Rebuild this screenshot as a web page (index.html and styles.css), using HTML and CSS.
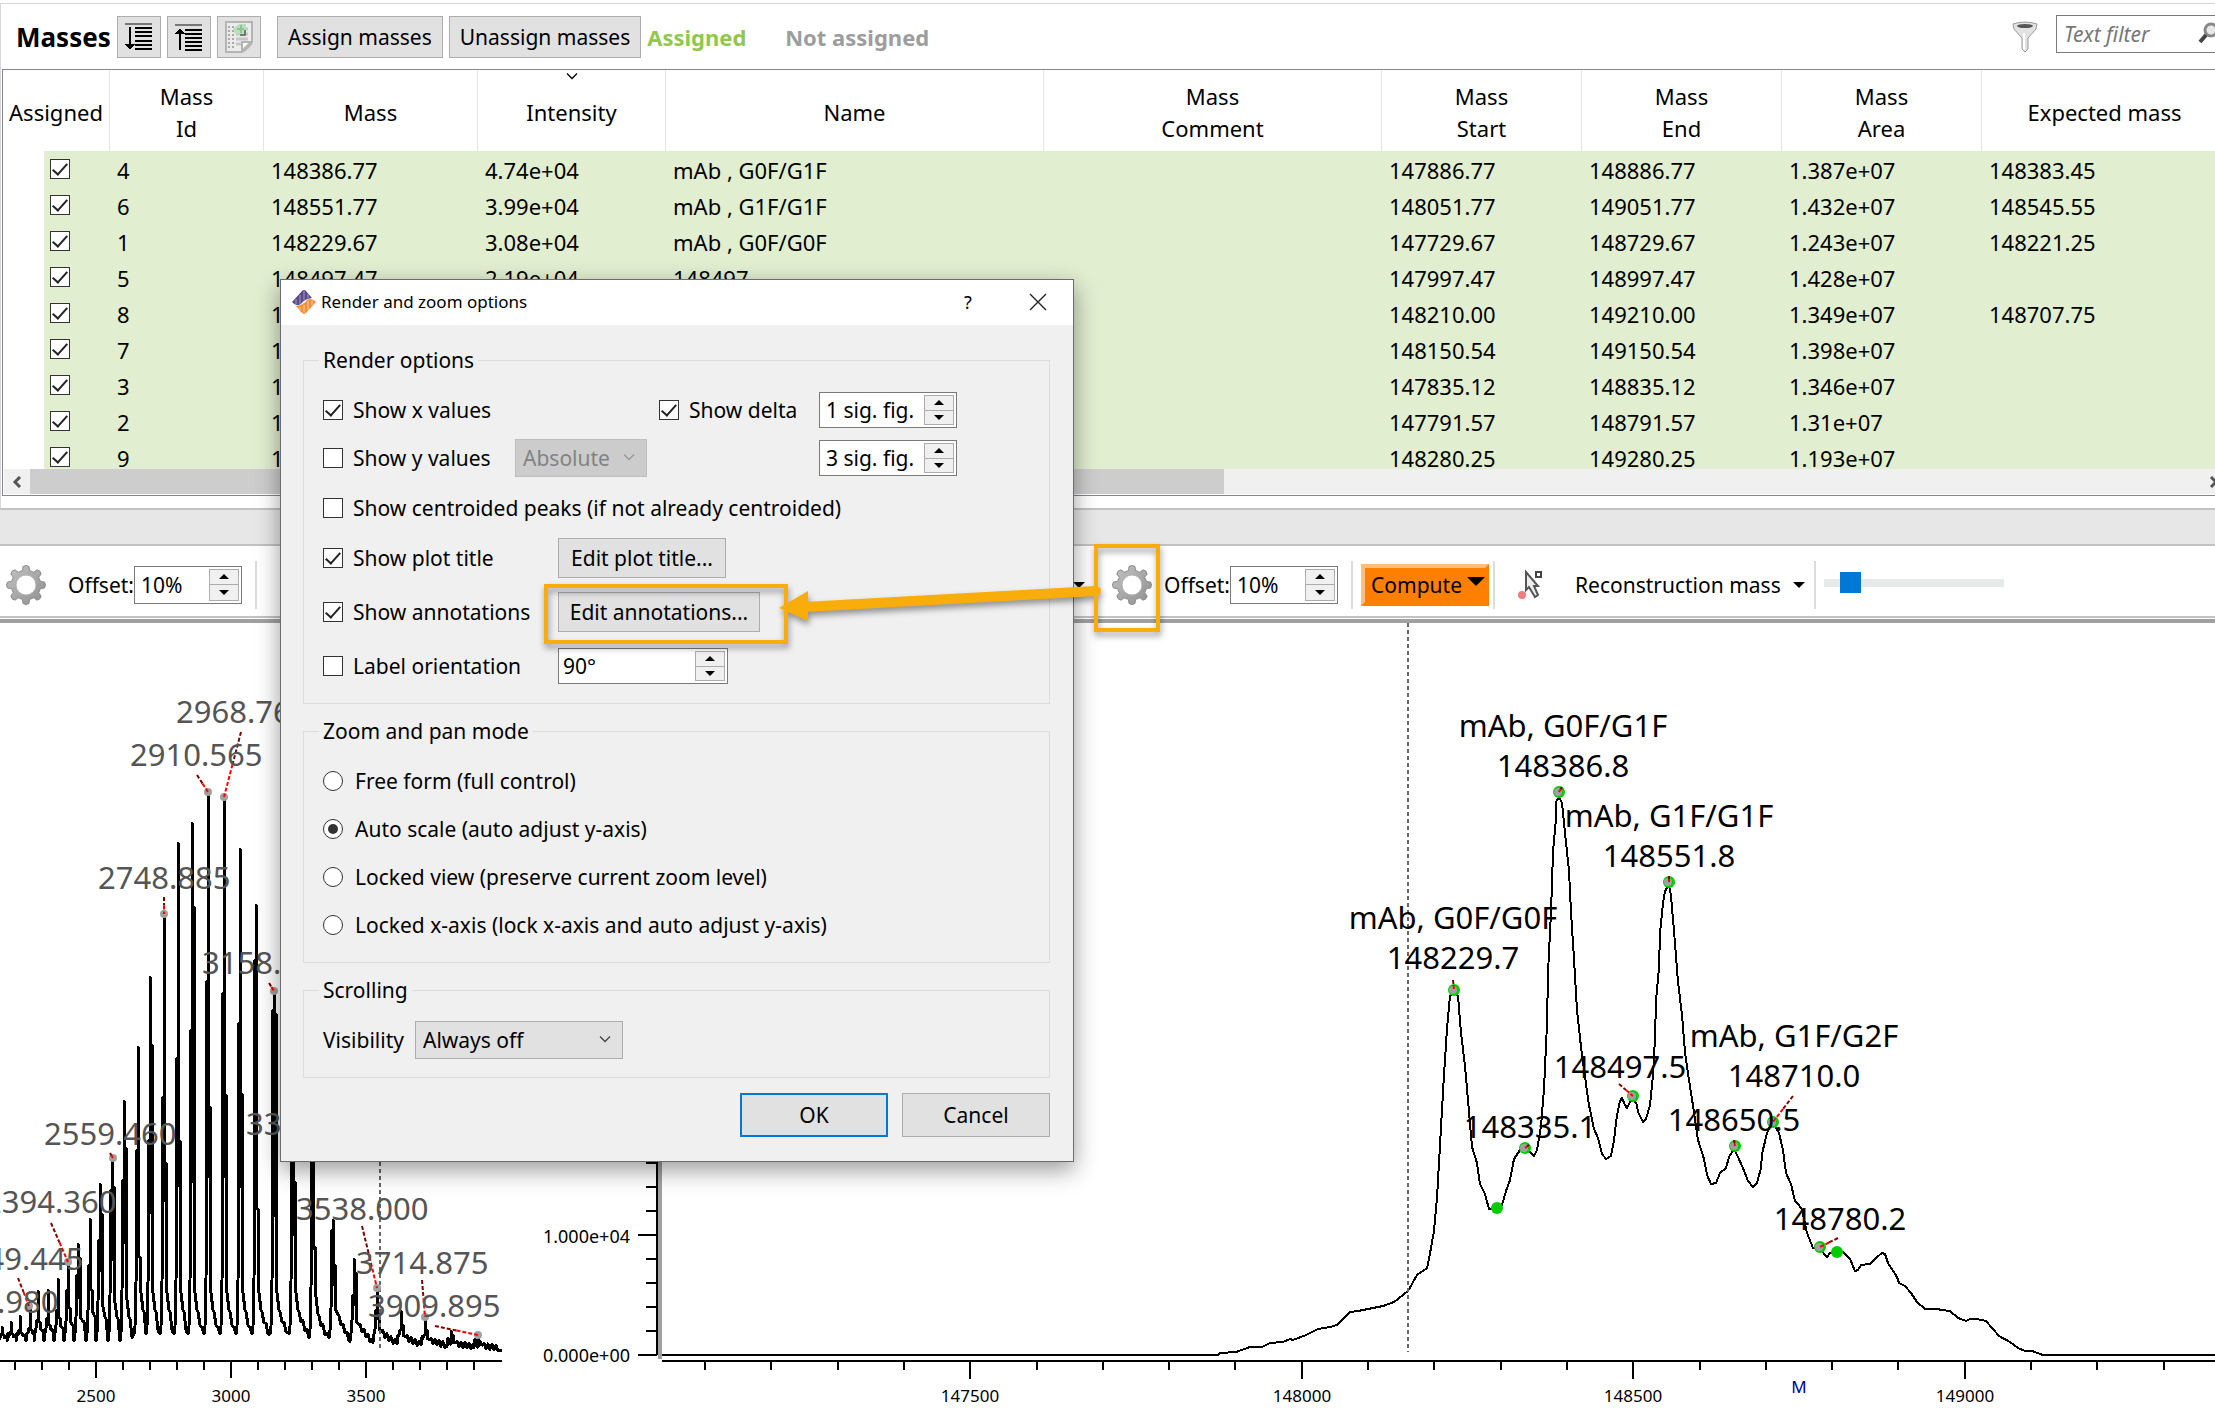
FILE: index.html
```html
<!DOCTYPE html>
<html lang="en">
<head>
  <meta charset="UTF-8" />
  <meta name="viewport" content="width=device-width, initial-scale=1.0" />
  <title>Masses</title>
  <link rel="stylesheet" href="styles.css">
</head>
<body>
  <svg class="defs" width="0" height="0" aria-hidden="true">
    <defs>
      <linearGradient id="metal" x1="0" y1="0" x2="1" y2="1">
        <stop offset="0" stop-color="#c4c4c4" />
        <stop offset="1" stop-color="#8e8e8e" />
      </linearGradient>
      <symbol id="gear" viewBox="0 0 40 40">
        <g fill="url(#metal)" stroke="#8c8c8c" stroke-width="1">
          <path d="M16.500 5.500L17 1.500Q20 -.5 23 1.500L23.500 5.500L27.800 7.300L31 4.800Q34.600 5.400 35.200 9L32.700 12.200L34.500 16.500L38.500 17Q40.500 20 38.500 23L34.500 23.500L32.700 27.800L35.200 31Q34.600 34.600 31 35.200L27.800 32.700L23.500 34.500L23 38.500Q20 40.500 17 38.500L16.500 34.500L12.200 32.700L9 35.200Q5.400 34.600 4.800 31L7.300 27.800L5.500 23.500L1.500 23Q-.5 20 1.500 17L5.500 16.500L7.300 12.200L4.800 9Q5.400 5.400 9 4.800L12.200 7.300Z" />
          <circle cx="20" cy="20" r="10" fill="#fff" stroke="#b5b5b5" />
        </g>
      </symbol>
      <symbol id="chevron" viewBox="0 0 12 8">
        <path d="M1 1.500L6 6.500L11 1.500" fill="none" stroke="currentColor" stroke-width="1.300" />
      </symbol>
    </defs>
  </svg>

  <main class="app">
    <section class="masses">
      <div class="mass-bar">
        <h1>Masses</h1>
        <button class="btn icon-btn" aria-label="Sort descending">
          <svg width="30" height="30" viewBox="0 0 30 30" shape-rendering="crispEdges">
            <path d="M1 2H28" stroke="#777" stroke-width="2" />
            <path d="M11 6H28M11 10H28M11 14H28M11 19H28M11 23H28M11 27H28M6 5V24" stroke="#000" stroke-width="2" />
            <path d="M1 22H11L6 28Z" />
          </svg>
        </button>
        <button class="btn icon-btn" aria-label="Sort ascending">
          <svg width="30" height="30" viewBox="0 0 30 30" shape-rendering="crispEdges">
            <path d="M1 3H28" stroke="#777" stroke-width="2" />
            <path d="M11 8H28M11 12H28M11 16H28M11 20H28M11 24H28M11 28H28M6 10V28" stroke="#000" stroke-width="2" />
            <path d="M1 12H11L6 6Z" />
          </svg>
        </button>
        <button class="btn icon-btn" aria-label="Export to spreadsheet">
          <svg width="32" height="34" viewBox="0 0 32 34">
            <path d="M3 2H29V22Q26 28 19 32H3Z" fill="#ececec" stroke="#b4b4b4" stroke-width="2" />
            <path d="M6 6V29M10 6V29" stroke="#aaa" stroke-width="2" stroke-dasharray="2 2" />
            <path d="M13 9H25M13 14H25M13 19H25M13 24H18" stroke="#c6c6c6" stroke-width="3" />
            <path d="M10 9L16 4H23V14H12Z" fill="#b9dfbc" />
            <path d="M14 9H21M18 5V13" stroke="#8cc792" stroke-width="2" />
            <path d="M22 10V15H17" fill="none" stroke="#777" stroke-width="2" />
            <path d="M19 31V22H28Z" fill="#fafafa" stroke="#b4b4b4" stroke-width="2" />
          </svg>
        </button>
        <button class="btn assign-btn">Assign masses</button>
        <button class="btn">Unassign masses</button>
        <span class="legend-on">Assigned</span>
        <span class="legend-off">Not assigned</span>
        <svg class="funnel" width="26" height="32" viewBox="0 0 26 32">
          <path d="M1 3Q13 -1 25 3L24 8L16 17V28L13 31L10 28V17L2 8Z" fill="#e2e2e2" stroke="#999" />
          <ellipse cx="13" cy="5" rx="8" ry="2" fill="#555" />
          <path d="M12 12V29" stroke="#fff" stroke-width="2" />
        </svg>
        <div class="filter">
          <input type="text" placeholder="Text filter" aria-label="Text filter" />
          <svg width="24" height="24" viewBox="0 0 24 24">
            <circle cx="14" cy="8" r="6" fill="#e8e8e8" stroke="#888" stroke-width="3" />
            <path d="M9 13L3 20" stroke="#444" stroke-width="4" />
          </svg>
        </div>
      </div>

      <div class="table-frame">
        <div class="table-view">
          <table>
            <colgroup>
              <col class="c-assigned"><col class="c-id"><col class="c-mass"><col class="c-intensity"><col class="c-name">
              <col class="c-comment"><col class="c-range"><col class="c-range"><col class="c-range"><col>
            </colgroup>
            <thead>
              <tr>
                <th>Assigned</th>
                <th>Mass<br>Id</th>
                <th>Mass</th>
                <th class="sorted"><svg width="12" height="8"><use href="#chevron" /></svg>Intensity</th>
                <th>Name</th>
                <th>Mass<br>Comment</th>
                <th>Mass<br>Start</th>
                <th>Mass<br>End</th>
                <th>Mass<br>Area</th>
                <th>Expected mass</th>
              </tr>
            </thead>
            <tbody>
              <tr><td><input type="checkbox" aria-label="Mass 4" checked></td><td>4</td><td>148386.77</td><td>4.74e+04</td><td>mAb , G0F/G1F</td><td></td><td>147886.77</td><td>148886.77</td><td>1.387e+07</td><td>148383.45</td></tr>
              <tr><td><input type="checkbox" aria-label="Mass 6" checked></td><td>6</td><td>148551.77</td><td>3.99e+04</td><td>mAb , G1F/G1F</td><td></td><td>148051.77</td><td>149051.77</td><td>1.432e+07</td><td>148545.55</td></tr>
              <tr><td><input type="checkbox" aria-label="Mass 1" checked></td><td>1</td><td>148229.67</td><td>3.08e+04</td><td>mAb , G0F/G0F</td><td></td><td>147729.67</td><td>148729.67</td><td>1.243e+07</td><td>148221.25</td></tr>
              <tr><td><input type="checkbox" aria-label="Mass 5" checked></td><td>5</td><td>148497.47</td><td>2.19e+04</td><td>148497</td><td></td><td>147997.47</td><td>148997.47</td><td>1.428e+07</td><td></td></tr>
              <tr><td><input type="checkbox" aria-label="Mass 8" checked></td><td>8</td><td>148710.00</td><td></td><td></td><td></td><td>148210.00</td><td>149210.00</td><td>1.349e+07</td><td>148707.75</td></tr>
              <tr><td><input type="checkbox" aria-label="Mass 7" checked></td><td>7</td><td>148650.54</td><td></td><td></td><td></td><td>148150.54</td><td>149150.54</td><td>1.398e+07</td><td></td></tr>
              <tr><td><input type="checkbox" aria-label="Mass 3" checked></td><td>3</td><td>148335.12</td><td></td><td></td><td></td><td>147835.12</td><td>148835.12</td><td>1.346e+07</td><td></td></tr>
              <tr><td><input type="checkbox" aria-label="Mass 2" checked></td><td>2</td><td>148291.57</td><td></td><td></td><td></td><td>147791.57</td><td>148791.57</td><td>1.31e+07</td><td></td></tr>
              <tr><td><input type="checkbox" aria-label="Mass 9" checked></td><td>9</td><td>148780.25</td><td></td><td></td><td></td><td>148280.25</td><td>149280.25</td><td>1.193e+07</td><td></td></tr>
            </tbody>
          </table>
        </div>
        <div class="scrollbar">
          <button aria-label="Scroll left"><svg width="10" height="12" viewBox="0 0 10 12"><path d="M8 1L3 6L8 11" fill="none" stroke="#555" stroke-width="3" /></svg></button>
          <div class="track"><div class="thumb"></div></div>
          <button class="scroll-right" aria-label="Scroll right"><svg width="10" height="12" viewBox="0 0 10 12"><path d="M2 1L7 6L2 11" fill="none" stroke="#555" stroke-width="3" /></svg></button>
        </div>
      </div>
    </section>

    <div class="band"></div>

    <section class="plots">
      <div class="pane">
        <div class="plot-bar">
          <button class="gear-btn" aria-label="Plot options"><svg width="40" height="40"><use href="#gear" /></svg></button>
          <label for="offset1">Offset:</label>
          <span class="spin spin-offset"><input id="offset1" type="text" value="10%"><span class="steps"><button aria-label="Up"></button><button aria-label="Down"></button></span></span>
          <span class="sep"></span>
        </div>
        <svg class="plot" id="spectrum" viewBox="0 623 658 786"></svg>
      </div>
      <div class="divider"></div>
      <div class="pane">
        <div class="plot-bar plot-bar-right">
          <button class="drop-btn" aria-label="View"><span class="caret"></span></button>
          <button class="gear-btn" aria-label="Plot options"><svg width="40" height="40"><use href="#gear" /></svg></button>
          <label for="offset2">Offset:</label>
          <span class="spin spin-offset"><input id="offset2" type="text" value="10%"><span class="steps"><button aria-label="Up"></button><button aria-label="Down"></button></span></span>
          <span class="sep"></span>
          <button class="compute">Compute<span class="caret caret-big"></span></button>
          <span class="sep sep-tight"></span>
          <button class="pick-btn" aria-label="Pick points">
            <svg width="26" height="30" viewBox="0 0 26 30">
              <path d="M9 2V20L12 17L18 27L21 25L17 16H21Z" fill="#eee" stroke="#555" stroke-width="2" />
              <rect x="19" y="2" width="5" height="5" fill="#fff" stroke="#444" stroke-width="2" />
              <circle cx="5" cy="25" r="4" fill="#f47c7c" />
            </svg>
          </button>
          <button class="mode-btn">Reconstruction mass<span class="caret"></span></button>
          <span class="sep"></span>
          <input class="slider" type="range" min="0" max="100" value="10" aria-label="Smoothing">
        </div>
        <svg class="plot" id="deconvolved" viewBox="662 623 1553 786"></svg>
      </div>
    </section>
  </main>

  <div class="dialog" role="dialog" aria-labelledby="dialogTitle">
    <header>
      <svg width="24" height="24" viewBox="0 0 24 24">
        <path d="M0 12L10 1Q12 -1 14 1L20 8Q12 9 9 14Q4 17 0 12Z" fill="#5b4b8a" />
        <path d="M24 12L14 23Q12 25 10 23L4 16Q12 15 15 10Q20 7 24 12Z" fill="#f0923b" />
        <path d="M4 9V14M8 5V14M12 1V10M16 4V8" stroke="#a79cc4" />
        <path d="M8 17V20M12 15V23M16 11V20M20 10V15" stroke="#f9cfa4" />
      </svg>
      <h2 id="dialogTitle">Render and zoom options</h2>
      <button class="help-btn" aria-label="Help">?</button>
      <button class="close-btn" aria-label="Close"><svg width="18" height="18" viewBox="0 0 18 18"><path d="M1 1L17 17M17 1L1 17" stroke="#222" stroke-width="1.400" /></svg></button>
    </header>
    <form class="dialog-body">
      <fieldset>
        <legend>Render options</legend>
        <div class="rows render-rows">
          <div class="row">
            <label class="lead-delta"><input type="checkbox" checked>Show x values</label>
            <label class="lead-spin"><input type="checkbox" checked>Show delta</label>
            <span class="spin spin-fig"><input type="text" value="1 sig. fig." aria-label="Delta figures"><span class="steps"><button type="button" aria-label="Up"></button><button type="button" aria-label="Down"></button></span></span>
          </div>
          <div class="row">
            <label class="lead-select"><input type="checkbox">Show y values</label>
            <span class="select select-abs"><select aria-label="Y values" disabled><option>Absolute</option></select><svg width="12" height="8"><use href="#chevron" /></svg></span>
            <span class="spin spin-fig"><input type="text" value="3 sig. fig." aria-label="Y figures"><span class="steps"><button type="button" aria-label="Up"></button><button type="button" aria-label="Down"></button></span></span>
          </div>
          <div class="row"><label><input type="checkbox">Show centroided peaks (if not already centroided)</label></div>
          <div class="row">
            <label class="lead-edit"><input type="checkbox" checked>Show plot title</label>
            <button type="button" class="btn edit-title">Edit plot title...</button>
          </div>
          <div class="row">
            <label class="lead-edit"><input type="checkbox" checked>Show annotations</label>
            <button type="button" class="btn edit-notes">Edit annotations...</button>
          </div>
          <div class="row">
            <label class="lead-edit"><input type="checkbox">Label orientation</label>
            <span class="spin spin-angle"><input type="text" value="90°" aria-label="Angle"><span class="steps"><button type="button" aria-label="Up"></button><button type="button" aria-label="Down"></button></span></span>
          </div>
        </div>
      </fieldset>
      <fieldset>
        <legend>Zoom and pan mode</legend>
        <div class="rows radio-rows">
          <div class="row"><label><input type="radio" name="zoom">Free form (full control)</label></div>
          <div class="row"><label><input type="radio" name="zoom" checked>Auto scale (auto adjust y-axis)</label></div>
          <div class="row"><label><input type="radio" name="zoom">Locked view (preserve current zoom level)</label></div>
          <div class="row"><label><input type="radio" name="zoom">Locked x-axis (lock x-axis and auto adjust y-axis)</label></div>
        </div>
      </fieldset>
      <fieldset>
        <legend>Scrolling</legend>
        <div class="rows">
          <div class="row">
            <label class="lead-vis" for="visibility">Visibility</label>
            <span class="select select-vis"><select id="visibility"><option>Always off</option></select><svg width="12" height="8"><use href="#chevron" /></svg></span>
          </div>
        </div>
      </fieldset>
      <div class="actions">
        <button type="button" class="btn ok">OK</button>
        <button type="button" class="btn">Cancel</button>
      </div>
    </form>
  </div>

  <!-- callout: gear button opens the annotations editor -->
  <svg class="callout" width="640" height="110" viewBox="535 540 640 110" aria-hidden="true">
    <g fill="none" stroke="#f8ad0a" stroke-width="4">
      <rect x="546" y="587" width="240" height="56" />
      <rect x="1096" y="547" width="62" height="84" />
    </g>
    <path d="M1096 592L804 608" stroke="#f8ad0a" stroke-width="10" stroke-linecap="round" />
    <path d="M779 609L808 592V622Z" fill="#f8ad0a" />
  </svg>

  <script src="plots.js"></script>
</body>
</html>
```
FILE: styles.css
```css
* {
  box-sizing: border-box;
}

body {
  margin: 0;
  overflow: hidden;
  background: #fff;
  color: #000;
  font-family: "Noto Sans", "Open Sans", sans-serif;
  font-size: 21px;
}

button, input, select {
  font: inherit;
  color: inherit;
}

button {
  padding: 0;
  border: 0;
  background: none;
}

.defs {
  position: absolute;
}

.app {
  padding-top: 3px;
}

/* masses toolbar */
.masses {
  border-top: 1px solid #d8d8d8;
  border-left: 1px solid #d8d8d8;
  padding: 0 0 12px 1px;
}

.mass-bar {
  display: flex;
  align-items: center;
  gap: 6px;
  height: 65px;
  padding: 0 0 0 14px;
  overflow: hidden;
}

h1 {
  margin: 0;
  font-size: 26px;
  line-height: 32px;
  width: 95px;
}

.btn {
  height: 42px;
  padding: 0 10px;
  border: 1px solid #adadad;
  background: #e1e1e1;
  white-space: nowrap;
}

.icon-btn {
  width: 44px;
  padding: 0;
  display: flex;
  align-items: center;
  justify-content: center;
}

.assign-btn {
  margin-left: 10px;
}

.legend-on, .legend-off {
  font-size: 22px;
  font-weight: bold;
}

.legend-on {
  color: #92c74e;
  width: 132px;
}

.legend-off {
  color: #9d9d9d;
}

.funnel {
  margin-left: auto;
}

.filter {
  display: flex;
  align-items: center;
  width: 173px;
  height: 38px;
  margin: 0 -14px 6px 12px;
  border: 1px solid #7a7a7a;
  background: #fff;
}

.filter input {
  width: 140px;
  padding: 0 7px;
  border: 0;
  outline: 0;
  background: none;
}

.filter input::placeholder {
  font-style: italic;
  color: #777;
}

/* table */
.table-frame {
  border: 1px solid #828790;
  border-right: 0;
}

.table-view {
  height: 399px;
  overflow: hidden;
}

table {
  width: 100%;
  table-layout: fixed;
  border-collapse: separate;
  border-spacing: 0;
  font-size: 22px;
}

.c-assigned { width: 107px; }
.c-id { width: 154px; }
.c-mass { width: 214px; }
.c-intensity { width: 188px; }
.c-name { width: 378px; }
.c-comment { width: 338px; }
.c-range { width: 200px; }

th {
  position: relative;
  height: 81px;
  padding: 2px 0 0;
  border-right: 1px solid #e5e5e5;
  font-weight: normal;
  line-height: 32px;
}

th:last-child {
  border-right: 0;
  padding-left: 12px;
}

.sorted svg {
  position: absolute;
  top: 2px;
  left: 50%;
  margin-left: -6px;
}

td {
  height: 36px;
  padding: 1px 0 0 7px;
  background: #e1eed0;
  line-height: 32px;
  white-space: nowrap;
}

td:first-child {
  border-left: 41px solid #fff;
  padding: 0 0 0 6px;
}

input[type="checkbox"], input[type="radio"] {
  appearance: none;
  flex: none;
  display: grid;
  place-items: center;
  width: 20px;
  height: 20px;
  margin: 0;
  border: 1px solid #333;
  background: #fff;
}

input[type="checkbox"]:checked::after {
  content: "";
  width: 6px;
  height: 13px;
  margin-top: -4px;
  border: solid #222;
  border-width: 0 2px 2px 0;
  transform: rotate(42deg);
}

input[type="radio"] {
  border-radius: 50%;
}

input[type="radio"]:checked::after {
  content: "";
  width: 10px;
  height: 10px;
  border-radius: 50%;
  background: #333;
}

.scrollbar {
  display: flex;
  height: 25px;
  margin: 0 0 1px 1px;
  background: #f0f0f0;
}

.scrollbar button {
  display: grid;
  place-items: center;
  width: 26px;
}

.scroll-right {
  margin-right: -12px;
}

.track {
  flex: 1;
}

.thumb {
  width: 55%;
  height: 100%;
  background: #cdcdcd;
}

.band {
  height: 38px;
  border: solid #c2c2c2;
  border-width: 2px 0;
  background: #e7e7e7;
}

/* plots */
.plots {
  display: grid;
  grid-template-columns: 658fr 4px 1553fr;
}

.pane {
  min-width: 0;
}

.divider {
  background: #a0a0a0;
  margin-bottom: 50px;
}

.plot-bar {
  display: flex;
  align-items: center;
  height: 77px;
  padding: 4px 0 0 6px;
  border-bottom: 4px solid #a0a0a0;
  background: linear-gradient(#c2c2c2, #c2c2c2) 0 70px / 100% 2px no-repeat;
}

.plot-bar label {
  width: 66px;
}

.plot-bar-right {
  padding-left: 10px;
}

.gear-btn {
  width: 40px;
  height: 40px;
  margin-right: 22px;
}

.plot-bar-right .gear-btn {
  margin: 0 12px 0 27px;
}

.drop-btn {
  width: 413px;
  height: 40px;
  display: flex;
  align-items: center;
  justify-content: flex-end;
}

.caret {
  border: 6px solid transparent;
  border-top-color: #000;
  border-bottom: 0;
}

.caret-big {
  border-width: 9px 9px 0;
  margin: 0 0 6px 5px;
}

.sep {
  width: 2px;
  height: 48px;
  margin: 0 8px 0 13px;
  background: #dcdcdc;
}

.sep-tight {
  margin: 0 22px 0 4px;
}

.compute {
  display: flex;
  align-items: center;
  justify-content: flex-end;
  width: 128px;
  height: 42px;
  border: 4px solid #ff8000;
  border-top-color: #ffbe7d;
  border-left-color: #ffbe7d;
  background: #ff8000;
  white-space: nowrap;
}

.pick-btn {
  width: 26px;
  height: 30px;
  margin-right: 32px;
}

.mode-btn {
  display: flex;
  align-items: center;
  justify-content: space-between;
  width: 230px;
  white-space: nowrap;
}

.mode-btn + .sep {
  margin-left: 9px;
}

.slider {
  appearance: none;
  width: 180px;
  height: 22px;
  margin: 0 0 4px;
  background: linear-gradient(#e7eaea, #e7eaea) 0 7px / 100% 8px no-repeat;
}

.slider::-webkit-slider-thumb {
  appearance: none;
  width: 21px;
  height: 21px;
  background: #0078d7;
}

.plot {
  display: block;
  width: 100%;
}

.trace {
  fill: none;
  stroke: #000;
  stroke-width: 2;
  stroke-linejoin: round;
  shape-rendering: crispEdges;
}

.spectrum-trace {
  stroke-width: 3;
}

.axis {
  fill: none;
  stroke: #000;
  stroke-width: 2;
  shape-rendering: crispEdges;
}

.tick-label {
  font-size: 17px;
}

.y-label {
  font-size: 18px;
}

.peak-label {
  font-size: 31px;
}

.raw {
  fill: #555;
}

.unit {
  font-size: 17px;
  fill: #000099;
}

.cursor-line {
  stroke: #666;
  stroke-width: 2;
  stroke-dasharray: 4 3;
  shape-rendering: crispEdges;
}

.leader-start, .leader-end {
  stroke-width: 2;
  stroke-dasharray: 4 2;
}

.leader-start { stroke: #800000; }
.leader-end { stroke: #ff0000; }
.dot { fill: #a0a0a0; }
.dot-on { fill: #00cc00; }

/* spin boxes and drop-downs */
.spin {
  display: flex;
  height: 38px;
  padding: 2px;
  border: 1px solid #7a7a7a;
  background: #fff;
}

.spin input {
  flex: 1;
  min-width: 0;
  padding: 0 0 0 4px;
  border: 0;
  outline: 0;
  background: none;
}

.spin-offset { width: 108px; }
.spin-fig { width: 138px; height: 36px; }
.spin-angle { width: 170px; height: 36px; }
.spin-angle input { padding-left: 2px; }

.steps {
  display: flex;
  flex-direction: column;
  width: 30px;
}

.steps button {
  flex: 1;
  display: grid;
  place-items: center;
  border: 1px solid #adadad;
  background: #f0f0f0;
}

.steps button + button {
  border-top: 0;
}

.steps button::after {
  content: "";
  border: 5px solid transparent;
  border-top: 0;
  border-bottom-color: #000;
}

.steps button + button::after {
  border-top: 5px solid #000;
  border-bottom: 0;
}

.select {
  position: relative;
  height: 38px;
}

.select select {
  appearance: none;
  width: 100%;
  height: 38px;
  padding: 0 7px;
  border: 1px solid #adadad;
  border-radius: 0;
  background: #e1e1e1;
}

.select svg {
  position: absolute;
  top: 14px;
  right: 12px;
  color: #444;
}

.select select:disabled {
  border-color: #bfbfbf;
  background: #ccc;
  color: #838383;
  opacity: 1;
}

.select select:disabled + svg {
  color: #999;
}

.select-abs { width: 132px; margin-right: 172px; }
.select-vis { width: 208px; }

/* dialog */
.dialog {
  position: absolute;
  top: 279px;
  left: 280px;
  width: 794px;
  border: 1px solid #6b6b6b;
  background: #f0f0f0;
  box-shadow: 0 8px 22px rgba(0, 0, 0, 0.4);
}

.dialog header {
  display: flex;
  align-items: center;
  height: 45px;
  padding: 0 26px 2px 11px;
  background: #fff;
}

h2 {
  flex: 1;
  margin: 0;
  padding-left: 5px;
  font-size: 17px;
  font-weight: normal;
}

.help-btn {
  width: 30px;
  margin-right: 46px;
  font-size: 18px;
}

.close-btn {
  display: flex;
}

.dialog-body {
  padding: 23px 23px 24px 22px;
}

fieldset {
  min-width: 0;
  margin: 0 0 15px;
  padding: 14px 19px 13px;
  border: 1px solid #dcdcdc;
}

legend {
  margin-left: -4px;
  padding: 0 4px;
  line-height: 24px;
}

.rows {
  display: grid;
  grid-auto-rows: 48px;
}

.render-rows {
  grid-template-rows: 48px 48px 52px 48px 60px 48px;
}

.row {
  display: flex;
  align-items: center;
}

.row label {
  display: flex;
  align-items: center;
  gap: 10px;
  white-space: nowrap;
}

.radio-rows label {
  gap: 12px;
}

.lead-delta { width: 336px; }
.lead-spin { width: 160px; }
.lead-select { width: 192px; }
.lead-edit { width: 235px; }
.lead-vis { width: 92px; }
.row .btn { height: 40px; padding: 0; }
.edit-title { width: 168px; }
.edit-notes { width: 202px; }

.actions {
  display: flex;
  justify-content: flex-end;
  gap: 14px;
}

.actions .btn {
  width: 148px;
  height: 44px;
}

.actions .ok {
  border: 2px solid #0078d7;
}

.callout {
  position: absolute;
  top: 539px;
  left: 535px;
  filter: drop-shadow(1px 4px 3px rgba(0, 0, 0, 0.4));
  pointer-events: none;
}
```
FILE: plots.js
```js
const SVG = "http://www.w3.org/2000/svg";

function add(parent, name, cls, attrs, text) {
  const el = document.createElementNS(SVG, name);
  if (cls) el.setAttribute("class", cls);
  for (const key in attrs) el.setAttribute(key, attrs[key]);
  if (text) el.textContent = text;
  parent.appendChild(el);
  return el;
}

function line(parent, cls, x1, y1, x2, y2) {
  add(parent, "line", cls, { x1, y1, x2, y2 });
}

// dashed leader from label to peak, dark red first half and red second half
function leader(parent, x1, y1, x2, y2) {
  const mx = (x1 + x2) / 2;
  const my = (y1 + y2) / 2;
  line(parent, "leader-start", x1, y1, mx, my);
  line(parent, "leader-end", mx, my, x2, y2);
}

function drawSpectrum() {
  const svg = document.getElementById("spectrum");

  // x, top, left shoulder, right shoulder
  const peaks = [
    [2, 1327, 1335, 1335], [11, 1322, 1332, 1334], [20, 1316, 1330, 1333], [30, 1307, 1328, 1330],
    [38, 1291, 1320, 1322], [48, 1290, 1318, 1325], [58, 1279, 1310, 1318], [68, 1263, 1290, 1308],
    [78, 1244, 1275, 1258], [90, 1219, 1265, 1290], [100, 1184, 1240, 1214], [112, 1160, 1190, 1187],
    [124, 1101, 1180, 1148], [138, 1047, 1150, 1257], [150, 977, 1140, 1045], [164, 916, 1097, 1163],
    [178, 843, 1058, 1141], [192, 823, 1030, 907], [208, 795, 981, 1107], [224, 799, 993, 1095],
    [240, 849, 1023, 1094], [256, 905, 960, 1209], [274, 991, 1010, 1014], [293, 1085, 1100, 1182],
    [313, 1140, 1150, 1247], [333, 1220, 1230, 1265], [354, 1259, 1295, 1273], [377, 1290, 1310, 1312],
    [401, 1311, 1330, 1325], [425, 1319, 1335, 1330], [451, 1331, 1344, 1335], [478, 1336, 1347, 1341]
  ];

  const valley = x => x < 130 ? 1341 : x < 300 ? 1334 : x < 350 ? 1338 : 1341 + (x - 350) / 20;
  const points = [[0, 1338]];
  peaks.forEach(([x, top, left, right], i) => {
    const next = i < peaks.length - 1 ? peaks[i + 1][0] : 503;
    const base = valley(x);
    const drop = base - top;
    const up = base - Math.min(50, drop * 0.25);
    points.push([x - 4, base], [x - 3, base - 8], [x - 2, up], [x - 1, left], [x, left], [x, top],
      [x, up - drop * 0.2], [x + 1, right], [x + 2, right], [x + 2, up], [x + 5, base - Math.min(24, drop * 0.2)]);
    // jagged decay down to the next peak
    const gap = next - 5 - (x + 6);
    for (let k = 0; k <= gap; k += 2) {
      const fall = Math.min(20, drop * 0.18) * (1 - k / Math.max(gap, 1));
      points.push([x + 6 + k, base - fall + (k % 4 ? 3 : -2)]);
    }
  });
  points.push([502, 1350]);
  add(svg, "polyline", "trace spectrum-trace", { points: points.map(p => p.join(",")).join(" ") });

  line(svg, "cursor-line", 380, 623, 380, 1351);

  line(svg, "axis", 0, 1361, 502, 1361);
  for (let i = 0; i < 18; i++) {
    const x = 15 + i * 27;
    const major = i % 5 === 3;
    line(svg, "axis", x, 1361, x, major ? 1378 : 1370);
    if (major) {
      add(svg, "text", "tick-label", { x, y: 1402, "text-anchor": "middle" }, String(2500 + (i - 3) * 100));
    }
  }

  // intensity axis of the neighbouring plot
  line(svg, "axis", 657, 623, 657, 1355);
  for (let i = 0; i < 9; i++) {
    const y = 1355 - i * 24;
    line(svg, "axis", i % 5 ? 646 : 638, y, 657, y);
  }
  add(svg, "text", "y-label", { x: 630, y: 1243, "text-anchor": "end" }, "1.000e+04");
  add(svg, "text", "y-label", { x: 630, y: 1362, "text-anchor": "end" }, "0.000e+00");

  const labels = [
    ["2968.765", 176, 723, 241, 732, 224, 797], ["2910.565", 130, 766, 197, 775, 208, 792],
    ["2748.885", 98, 889, 164, 897, 164, 914], ["3158.340", 202, 974, 269, 983, 274, 991],
    ["3302.235", 246, 1135, 300, 1140, 313, 1150], ["2559.460", 44, 1145, 110, 1153, 113, 1158],
    ["2394.360", -16, 1213, 51, 1223, 68, 1262], ["2249.445", -49, 1270, 18, 1278, 29, 1306],
    ["2120.980", -74, 1313, -10, 1320, -6, 1325], ["3538.000", 296, 1220, 362, 1226, 377, 1288],
    ["3714.875", 356, 1274, 422, 1280, 425, 1317], ["3909.895", 368, 1317, 435, 1326, 478, 1335]
  ];
  for (const [text, x, y, x1, y1, x2, y2] of labels) {
    add(svg, "text", "peak-label raw", { x, y }, text);
    add(svg, "circle", "dot", { cx: x2, cy: y2, r: 4 });
    leader(svg, x1, y1, x2, y2);
  }
}

function drawDeconvolved() {
  const svg = document.getElementById("deconvolved");

  const trace = "662,1355 1218,1355 1220,1353 1236,1352 1250,1347 1262,1347 1270,1343 1283,1342 1290,1339 1293,1340 1306,1335 1318,1329 1330,1327 1337,1325 " +
    "1350,1312 1358,1311 1383,1306 1394,1302 1408,1291 1417,1275 1427,1268 1429,1259 1434,1231 1437,1198 1440,1145 1444,1075 1447,1029 1450,996 1454,990 1458,996 " +
    "1461,1033 1465,1066 1469,1112 1472,1147 1477,1163 1480,1184 1485,1194 1489,1209 1497,1209 1502,1205 1506,1191 1510,1180 1514,1159 1520,1150 1525,1146 1530,1152 " +
    "1534,1156 1537,1150 1541,1126 1544,1089 1547,1024 1548,973 1551,912 1553,852 1556,819 1556,802 1559,797 1562,803 1565,833 1569,871 1571,912 1574,959 " +
    "1577,1010 1581,1047 1586,1084 1589,1105 1594,1129 1598,1138 1602,1154 1606,1159 1611,1156 1614,1140 1617,1115 1620,1101 1622,1098 1625,1105 1627,1108 " +
    "1630,1102 1634,1100 1637,1105 1638,1112 1643,1122 1646,1119 1650,1105 1653,1075 1655,1038 1656,1001 1659,968 1660,933 1663,903 1665,891 1669,885 1671,896 " +
    "1674,931 1678,982 1682,1015 1685,1052 1689,1080 1694,1112 1698,1140 1704,1159 1707,1175 1711,1184 1716,1183 1720,1173 1726,1168 1729,1157 1734,1149 " +
    "1738,1157 1743,1168 1748,1181 1753,1187 1757,1183 1761,1168 1762,1154 1767,1133 1770,1126 1774,1124 1779,1133 1783,1150 1786,1173 1791,1184 1795,1201 " +
    "1799,1205 1802,1210 1807,1233 1813,1248 1819,1248 1827,1257 1830,1253 1843,1252 1850,1259 1855,1271 1858,1270 1861,1265 1870,1264 1877,1257 1882,1253 " +
    "1885,1254 1888,1263 1897,1277 1899,1283 1905,1286 1911,1293 1917,1302 1925,1309 1937,1309 1942,1310 1950,1311 1958,1318 1966,1321 1970,1319 1977,1319 " +
    "1986,1321 1999,1336 2010,1342 2018,1348 2025,1351 2032,1351 2043,1355 2215,1355";
  add(svg, "polyline", "trace", { points: trace });

  line(svg, "cursor-line", 1408, 623, 1408, 1352);

  line(svg, "axis", 662, 1361, 2215, 1361);
  for (let i = 0; i < 23; i++) {
    const x = Math.round(705 + i * 66.3);
    const major = i % 5 === 4;
    line(svg, "axis", x, 1361, x, major ? 1379 : 1370);
    if (major) {
      add(svg, "text", "tick-label", { x, y: 1402, "text-anchor": "middle" }, String(147500 + (i - 4) * 100));
    }
  }
  add(svg, "text", "unit", { x: 1799, y: 1393, "text-anchor": "middle" }, "M");

  // mass, name, label x, baseline, leader start x/y, peak x/y
  const labels = [
    ["148386.8", "mAb, G0F/G1F", 1563, 777, 1562, 787, 1559, 792],
    ["148551.8", "mAb, G1F/G1F", 1669, 867, 1669, 876, 1669, 882],
    ["148229.7", "mAb, G0F/G0F", 1453, 969, 1453, 980, 1454, 990],
    ["148710.0", "mAb, G1F/G2F", 1794, 1087, 1793, 1096, 1773, 1122],
    ["148497.5", "", 1620, 1078, 1619, 1084, 1633, 1096],
    ["148335.1", "", 1530, 1138, 1529, 1145, 1525, 1148],
    ["148650.5", "", 1734, 1131, 1734, 1140, 1735, 1146],
    ["148780.2", "", 1840, 1230, 1838, 1238, 1820, 1247]
  ];
  for (const [mass, name, x, y, x1, y1, x2, y2] of labels) {
    if (name) add(svg, "text", "peak-label", { x, y: y - 40, "text-anchor": "middle" }, name);
    add(svg, "text", "peak-label", { x, y, "text-anchor": "middle" }, mass);
    add(svg, "circle", "dot-on", { cx: x2, cy: y2, r: 6 });
    add(svg, "circle", "dot", { cx: x2 - 1, cy: y2, r: 4 });
    leader(svg, x1, y1, x2, y2);
  }
  add(svg, "circle", "dot-on", { cx: 1497, cy: 1208, r: 6 });
  add(svg, "circle", "dot-on", { cx: 1837, cy: 1252, r: 6 });
}

drawSpectrum();
drawDeconvolved();
```
